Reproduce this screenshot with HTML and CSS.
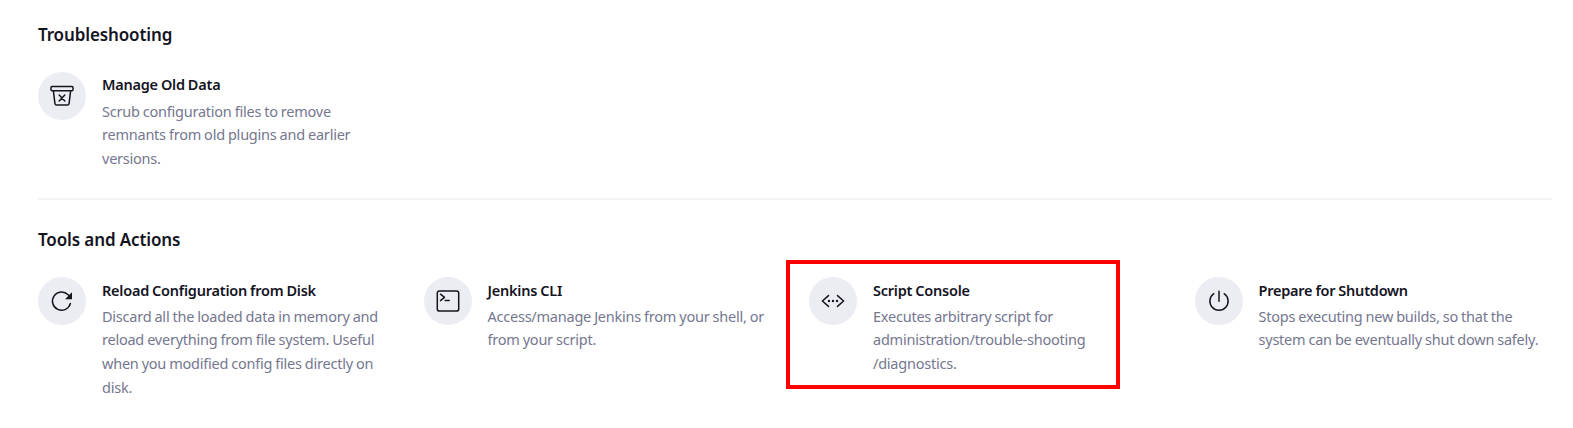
FILE: index.html
```html
<!DOCTYPE html>
<html lang="en">
<head>
<meta charset="utf-8">
<title>Manage Jenkins</title>
<link rel="stylesheet" href="styles.css">
</head>
<body>
<main class="page">
  <section class="section section-first">
    <h2 class="section-title">Troubleshooting</h2>
    <div class="grid">
      <a class="item">
        <span class="item-icon"><svg viewBox="0 0 24 24"><rect x="1" y="2.5" width="22" height="4.2" rx="1"/><path d="M3.4 6.8l1.5 12.6c.1 1 .9 1.7 1.8 1.7h10.6c.9 0 1.7-.7 1.8-1.7l1.5-12.6M9.2 11l5.6 6M14.8 11l-5.6 6"/></svg></span>
        <div class="item-text">
          <h3 class="item-title">Manage Old Data</h3>
          <p class="item-desc">Scrub configuration files to remove<br>remnants from old plugins and earlier<br>versions.</p>
        </div>
      </a>
    </div>
  </section>
  <section class="section section-divided">
    <h2 class="section-title">Tools and Actions</h2>
    <div class="grid">
      <a class="item">
        <span class="item-icon"><svg viewBox="0 0 24 24"><path d="M20.4 14.4a9.1 9.1 0 1 1-2.3-8.6l2 2"/><path class="solid" d="M22 3.2v7h-7z"/></svg></span>
        <div class="item-text">
          <h3 class="item-title">Reload Configuration from Disk</h3>
          <p class="item-desc">Discard all the loaded data in memory and<br>reload everything from file system. Useful<br>when you modified config files directly on<br>disk.</p>
        </div>
      </a>
      <a class="item">
        <span class="item-icon"><svg viewBox="0 0 24 24"><rect x="1.3" y="1.9" width="21.4" height="20.2" rx="2.2"/><path d="M4.5 5.2l4 3.2-4 3.2M9.2 11.6h4"/></svg></span>
        <div class="item-text">
          <h3 class="item-title">Jenkins CLI</h3>
          <p class="item-desc">Access/manage Jenkins from your shell, or<br>from your script.</p>
        </div>
      </a>
      <a class="item item-highlighted">
        <span class="item-icon"><svg viewBox="0 0 24 24"><path d="M7.5 6.6L1.4 12l6.1 5.4M16.5 6.6l6.1 5.4-6.1 5.4"/><g class="solid"><circle cx="8" cy="12" r="1.2"/><circle cx="12" cy="12" r="1.2"/><circle cx="16" cy="12" r="1.2"/></g></svg></span>
        <div class="item-text">
          <h3 class="item-title">Script Console</h3>
          <p class="item-desc">Executes arbitrary script for<br>administration/trouble-shooting<br>/diagnostics.</p>
        </div>
      </a>
      <a class="item">
        <span class="item-icon"><svg viewBox="0 0 24 24"><path d="M17.2 4.7a9.1 9.1 0 1 1-10.4 0M12 2.3v10"/></svg></span>
        <div class="item-text">
          <h3 class="item-title">Prepare for Shutdown</h3>
          <p class="item-desc">Stops executing new builds, so that the<br>system can be eventually shut down safely.</p>
        </div>
      </a>
    </div>
  </section>
</main>
</body>
</html>
```
FILE: styles.css
```css
*, *::after { box-sizing: border-box; }

body {
  margin: 0;
  background: #fff;
  color: #14141f;
  font-family: "Noto Sans", sans-serif;
}

.page { padding: 23px 21px 0 38px; }

.section-title {
  margin: 0 0 25px;
  font-size: 17px;
  line-height: 24px;
  font-weight: 650;
  letter-spacing: -0.12px;
}

.section-divided {
  margin-top: 27px;
  padding-top: 28px;
  border-top: 2px solid #f3f3f8;
}

.grid {
  display: grid;
  grid-template-columns: repeat(4, 1fr);
  column-gap: 28px;
}

.item {
  position: relative;
  display: flex;
  gap: 16px;
}

.item-icon {
  display: flex;
  flex: none;
  align-items: center;
  justify-content: center;
  width: 48px;
  height: 48px;
  border-radius: 50%;
  background: #ecedf3;
}

.item-icon svg {
  width: 24px;
  height: 24px;
  fill: none;
  stroke: #14141f;
  stroke-width: 1.5;
  stroke-linecap: round;
  stroke-linejoin: round;
}

.item-icon .solid { fill: #14141f; stroke: none; }

.item-text { padding-top: 3px; white-space: nowrap; }

.section-first .item-text { padding: 2.4px 0 0.3px; }
.section-first .item-title { margin-bottom: 4.3px; }

.item-title {
  margin: 0 0 4px;
  font-size: 14.5px;
  line-height: 21px;
  font-weight: 650;
  letter-spacing: -0.23px;
  word-spacing: -0.5px;
}

.item-desc {
  margin: 0;
  color: #75778f;
  font-size: 14.5px;
  line-height: 23.6px;
  letter-spacing: -0.23px;
  word-spacing: -0.45px;
}

/* Callout frame drawn over the grid around the highlighted item */
.item-highlighted::after {
  content: "";
  position: absolute;
  top: -17px;
  left: -23px;
  width: 334px;
  height: 129px;
  border: 4px solid #f00;
}
```
